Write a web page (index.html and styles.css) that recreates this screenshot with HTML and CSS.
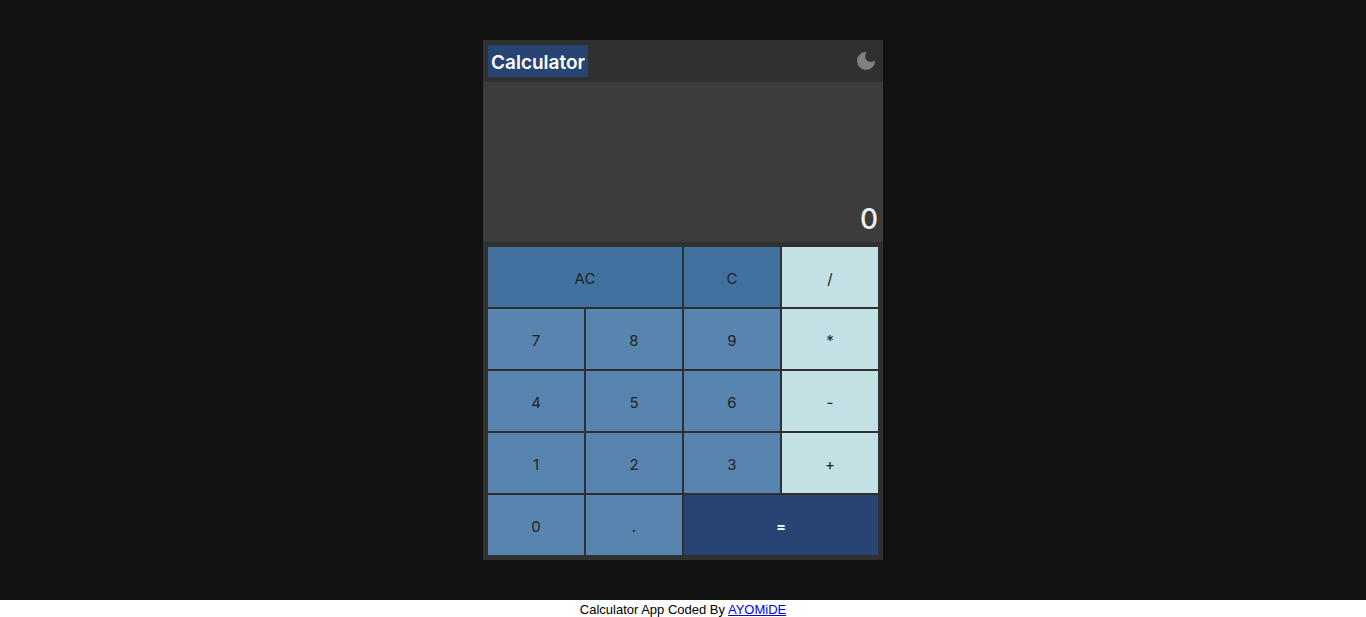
FILE: index.html
```html
<!DOCTYPE html>
<html lang="en">
<head>
<meta charset="utf-8">
<title>Calculator</title>
<link rel="stylesheet" href="styles.css">
</head>
<body>
<main class="stage">
  <section class="calculator">
    <header class="topbar">
      <h1 class="title">Calculator</h1>
      <button class="theme-toggle" type="button" aria-label="Toggle theme">
        <svg class="moon" viewBox="3 3 18 18" aria-hidden="true"><path d="M11.500 3A9 9 0 1 0 21 12.500C21 11.900 20.600 11.700 20.100 12C18.900 12.700 17.700 12.900 16.500 12.800C13.500 12.700 11.200 10.500 11.200 7.500C11.200 6.300 11.500 5.300 12 4.500C12.400 3.800 12.200 3 11.500 3Z"/></svg>
      </button>
    </header>
    <output class="display">0</output>
    <div class="keys">
      <button class="key clear wide" type="button">AC</button>
      <button class="key clear" type="button">C</button>
      <button class="key operator" type="button">/</button>
      <button class="key" type="button">7</button>
      <button class="key" type="button">8</button>
      <button class="key" type="button">9</button>
      <button class="key operator" type="button">*</button>
      <button class="key" type="button">4</button>
      <button class="key" type="button">5</button>
      <button class="key" type="button">6</button>
      <button class="key operator" type="button">-</button>
      <button class="key" type="button">1</button>
      <button class="key" type="button">2</button>
      <button class="key" type="button">3</button>
      <button class="key operator" type="button">+</button>
      <button class="key" type="button">0</button>
      <button class="key" type="button">.</button>
      <button class="key equals wide" type="button">=</button>
    </div>
  </section>
</main>
<footer class="credit">Calculator App Coded By <a href="#">AYOMiDE</a></footer>
</body>
</html>
```

FILE: styles.css
```css
* {
  box-sizing: border-box;
}

body {
  margin: 0;
  background: #fff;
  font-family: Inter, "Liberation Sans", sans-serif;
}

.stage {
  display: flex;
  justify-content: center;
  padding: 40px 0;
  background: #121212;
}

.calculator {
  width: 100%;
  max-width: 400px;
  background: #303030;
}

.topbar {
  display: flex;
  align-items: center;
  justify-content: space-between;
  padding: 5px 8px 5px 5px;
}

.title {
  margin: 0;
  padding: 6px 3px 2px;
  background: #274472;
  color: #fff;
  font-size: 19px;
  font-weight: 600;
  line-height: 24px;
}

.theme-toggle {
  display: flex;
  padding: 0;
  border: 0;
  background: none;
  color: #808080;
  cursor: pointer;
}

.moon {
  width: 18px;
  height: 18px;
  fill: currentColor;
}

.display {
  display: flex;
  align-items: flex-end;
  justify-content: flex-end;
  height: 160px;
  padding: 5px;
  background: #3c3c3c;
  color: #f0f0f5;
  font-size: 28px;
  font-weight: 500;
  line-height: 36px;
}

.keys {
  display: grid;
  grid-template-columns: repeat(4, 1fr);
  grid-auto-rows: 60px;
  gap: 2px;
  padding: 5px;
}

.key {
  padding: 2px 0 0;
  border: 0;
  background: #5885af;
  color: #222;
  font-family: inherit;
  font-size: 15px;
  cursor: pointer;
}

.wide {
  grid-column: span 2;
}

.clear {
  background: #41729f;
}

.operator {
  background: #c3e0e5;
}

.equals {
  background: #274472;
  color: #fff;
  font-weight: 600;
}

.credit {
  padding-top: 2px;
  font-family: "Liberation Sans", Arial, sans-serif;
  font-size: 13px;
  line-height: 15px;
  text-align: center;
}

.credit a {
  color: #0000ee;
}
```
